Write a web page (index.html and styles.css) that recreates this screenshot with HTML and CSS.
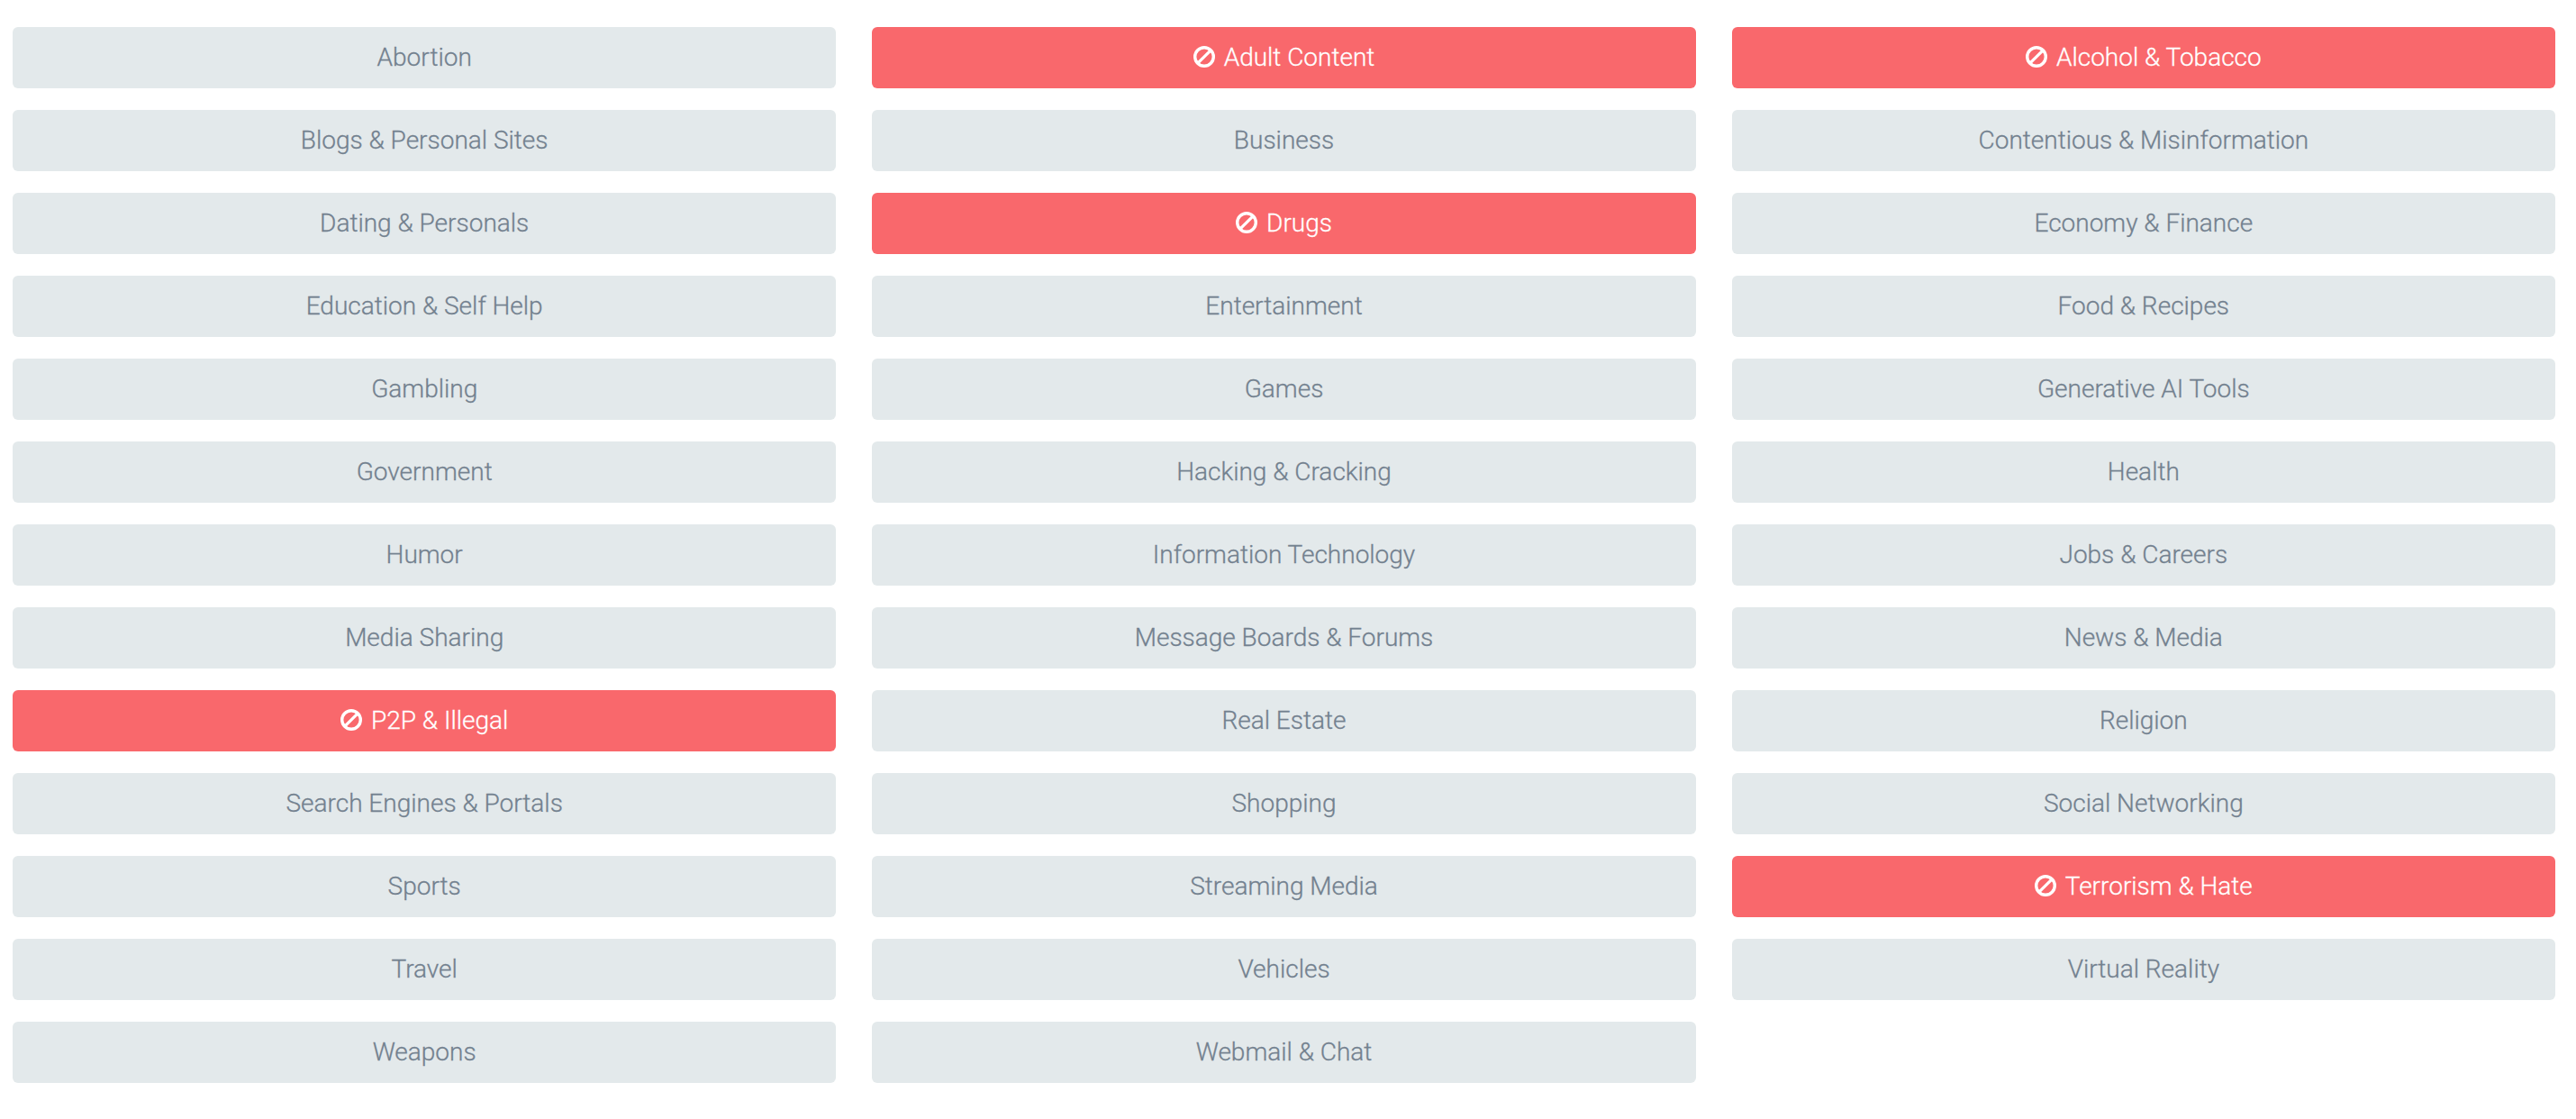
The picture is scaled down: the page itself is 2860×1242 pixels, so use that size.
FILE: index.html
```
<!DOCTYPE html>
<html lang="en">
<head>
    <meta charset="UTF-8">
    <meta name="viewport" content="width=device-width, initial-scale=1.0">
    <title>Categories</title>
    <link rel="stylesheet" href="styles.css">
</head>
<body>
    <svg class="sprite">
        <symbol id="ban" viewBox="0 0 24 24">
            <circle cx="12" cy="12" r="10.3" fill="none" stroke="currentColor" stroke-width="3.4"/>
            <path d="M4.8 19.2L19.2 4.8" stroke="currentColor" stroke-width="3.2"/>
        </symbol>
    </svg>
    <div class="categories">
        <div class="category">Abortion</div>
        <div class="category blocked"><svg class="icon"><use href="#ban"/></svg>Adult Content</div>
        <div class="category blocked"><svg class="icon"><use href="#ban"/></svg>Alcohol &amp; Tobacco</div>
        <div class="category">Blogs &amp; Personal Sites</div>
        <div class="category">Business</div>
        <div class="category">Contentious &amp; Misinformation</div>
        <div class="category">Dating &amp; Personals</div>
        <div class="category blocked"><svg class="icon"><use href="#ban"/></svg>Drugs</div>
        <div class="category">Economy &amp; Finance</div>
        <div class="category">Education &amp; Self Help</div>
        <div class="category">Entertainment</div>
        <div class="category">Food &amp; Recipes</div>
        <div class="category">Gambling</div>
        <div class="category">Games</div>
        <div class="category">Generative AI Tools</div>
        <div class="category">Government</div>
        <div class="category">Hacking &amp; Cracking</div>
        <div class="category">Health</div>
        <div class="category">Humor</div>
        <div class="category">Information Technology</div>
        <div class="category">Jobs &amp; Careers</div>
        <div class="category">Media Sharing</div>
        <div class="category">Message Boards &amp; Forums</div>
        <div class="category">News &amp; Media</div>
        <div class="category blocked"><svg class="icon"><use href="#ban"/></svg>P2P &amp; Illegal</div>
        <div class="category">Real Estate</div>
        <div class="category">Religion</div>
        <div class="category">Search Engines &amp; Portals</div>
        <div class="category">Shopping</div>
        <div class="category">Social Networking</div>
        <div class="category">Sports</div>
        <div class="category">Streaming Media</div>
        <div class="category blocked"><svg class="icon"><use href="#ban"/></svg>Terrorism &amp; Hate</div>
        <div class="category">Travel</div>
        <div class="category">Vehicles</div>
        <div class="category">Virtual Reality</div>
        <div class="category">Weapons</div>
        <div class="category">Webmail &amp; Chat</div>
    </div>
</body>
</html>
```

FILE: styles.css
```
body {
    margin: 0;
    background: #fff;
    font-family: Roboto, sans-serif;
    font-size: 28px;
    font-weight: 300;
}
.sprite {
    display: none;
}
.categories {
    display: grid;
    grid-template-columns: repeat(3, 1fr);
    gap: 24px 40px;
    padding: 30px 23px 0 14px;
}
.category {
    display: flex;
    justify-content: center;
    align-items: center;
    box-sizing: border-box;
    height: 68px;
    padding-bottom: 2px;
    border-radius: 6px;
    background: #e3e9eb;
    color: #73818f;
    -webkit-text-stroke: 0.3px;
}
.category.blocked {
    background: #f9686c;
    color: #fff;
}
.icon {
    width: 24px;
    height: 24px;
    margin-right: 10px;
}
```
